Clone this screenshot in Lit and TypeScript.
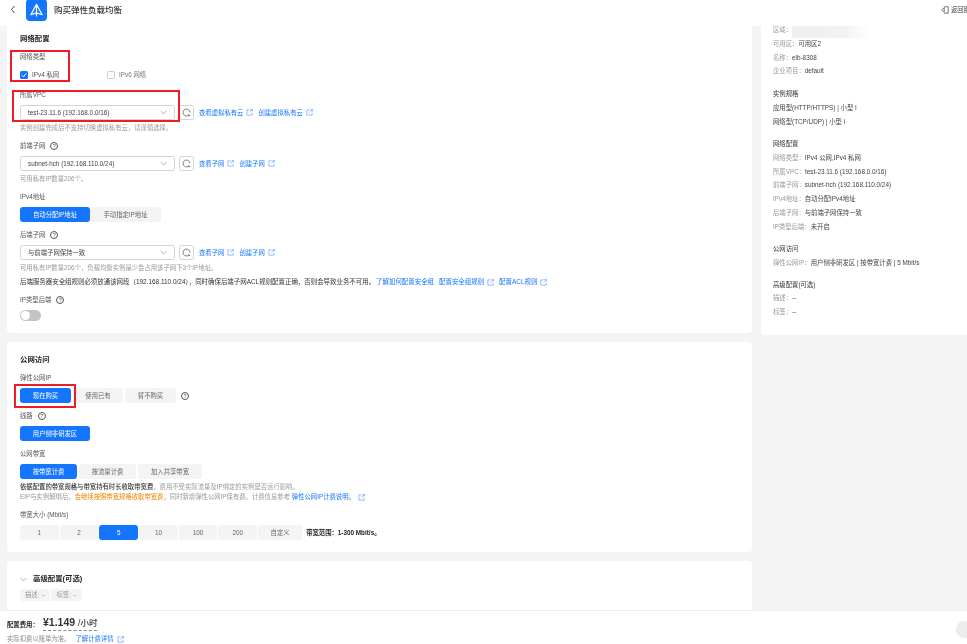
import { LitElement, html, css } from "lit";
import { customElement } from "lit/decorators.js";

const ext = html`<svg class="ext" viewBox="0 0 12 12"><path d="M6 1.5H1.5v9h9V6.5M7.5 1H11v3.5M11 1 6 6" fill="none" stroke="currentColor" stroke-width="1"/></svg>`;
const help = html`<span class="help">?</span>`;
const chev = html`<svg class="chev" viewBox="0 0 10 6"><path d="M1 1l4 4 4-4" fill="none" stroke="#8a8a8a" stroke-width="1"/></svg>`;
const refresh = html`<span class="refresh"><svg viewBox="0 0 12 12"><path d="M9.2 9.3A4.6 4.6 0 1 1 10.6 6M8.8 8.6 9.2 10.6 11 9.6" fill="none" stroke="#555" stroke-width="1"/></svg></span>`;

@customElement("app-root")
export class AppRoot extends LitElement {
  static styles = css`
    :host {
      display: flex; flex-direction: column; position: relative; height: 644px; width: 967px; overflow: hidden;
      background: #f4f4f4; color: #333; font: 6.35px/10px "Liberation Sans", "Noto Sans CJK SC", sans-serif;
      filter: blur(0.4px);
    }
    .head { height: 26px; flex: none; background: #fff; display: flex; align-items: flex-start; }
    .back { width: 6px; height: 9px; margin: 5px 0 0 10px; }
    .logo { width: 21px; height: 22px; margin: -1px 0 0 10px; flex: none; background: #1476ff; border-radius: 4px; display: flex; align-items: center; justify-content: center; }
    .logo svg { width: 15px; height: 15px; }
    .ttl { margin: 5px 0 0 7px; font-size: 8.5px; color: #333; font-weight: 500; }
    .ret { margin: 5px 0 0 auto; display: flex; align-items: center; gap: 2px; width: 26px; flex: none; white-space: nowrap; color: #444; overflow: hidden; }
    .ret svg { width: 8px; height: 8px; flex: none; }

    .main { flex: 1; min-height: 0; display: flex; overflow: hidden; padding-left: 7px; gap: 9px; }
    .left { width: 745px; flex: none; display: flex; flex-direction: column; gap: 9px; }
    .card { background: #fff; border-radius: 4px; padding: 13px 13px 12px; flex: none; }
    .card.first { padding-top: 8px; border-radius: 0 0 4px 4px; height: 307px; box-sizing: border-box; }
    .card.second { height: 210px; box-sizing: border-box; }
    .card.third { flex: 1; }
    h3 { margin: 0; font-size: 7.4px; line-height: 10px; font-weight: 700; color: #222; }
    .field { margin-top: 8px; }
    .lab { display: flex; align-items: center; gap: 5px; height: 10px; color: #555; }
    .ctl { margin-top: 5px; height: 15px; display: flex; align-items: center; }
    .hint { margin-top: 3px; color: #999; white-space: nowrap; }
    .warn { margin-top: 4px; color: #333; white-space: nowrap; display: flex; align-items: center; font-size: 6.45px; }
    .help { width: 8px; height: 8px; box-sizing: border-box; border: 0.8px solid #555; border-radius: 50%; font-size: 5.5px; line-height: 6.6px; text-align: center; color: #555; flex: none; }
    .help.after { margin-left: 5px; }
    .chk { width: 8px; height: 8px; background: #1476ff; border-radius: 1.5px; display: flex; flex: none; }
    .chk svg { width: 8px; height: 8px; }
    .chk.off { background: #fff; border: 0.8px solid #ccc; box-sizing: border-box; }
    .opt { display: flex; align-items: center; gap: 4px; color: #555; }
    .opt.a { width: 87px; }
    .opt.b { color: #777; }
    .sel { width: 155px; height: 15px; box-sizing: border-box; border: 0.8px solid #d4d4d4; border-radius: 2.5px; display: flex; align-items: center; justify-content: space-between; padding: 0 7px; color: #444; flex: none; }
    .chev { width: 7px; height: 5px; flex: none; }
    .refresh { width: 15px; height: 15px; margin-left: 4px; box-sizing: border-box; border: 0.8px solid #d4d4d4; border-radius: 2.5px; display: flex; align-items: center; justify-content: center; flex: none; }
    .refresh svg { width: 9px; height: 9px; }
    .links { display: flex; align-items: center; margin-left: 5px; color: #1476ff; }
    a { color: #1476ff; text-decoration: none; white-space: nowrap; display: inline-flex; align-items: center; }
    .links a { margin-right: 5px; }
    .ext { width: 7px; height: 7px; margin-left: 3px; color: #4a90ff; flex: none; }
    .warn a { margin-left: 5px; }
    .warn a:first-of-type { margin-left: 1px; }
    .tog { margin-top: 5px; width: 21px; height: 11px; border-radius: 6px; background: #c4c4c4; padding: 1px; box-sizing: border-box; }
    .tog i { display: block; width: 9px; height: 9px; border-radius: 50%; background: #fff; }
    .seg { display: flex; gap: 2px; height: 15px; }
    .seg > span { display: flex; align-items: center; justify-content: center; background: #f4f4f4; color: #666; border-radius: 3px; flex: none; box-sizing: border-box; }
    .seg > span.on { background: #1476ff; color: #fff; }
    .seg.join { gap: 0; }
    .seg.size { gap: 1px; }
    .w70 { width: 70px; } .w71 { width: 71px; } .w51 { width: 51px; } .w50 { width: 50px; }
    .w57 { width: 57px; } .w64 { width: 64px; } .w38 { width: 38.7px; } .w44 { width: 44px; }
    .range { margin-left: 4px; align-self: center; color: #222; font-weight: 700; white-space: nowrap; }
    .note { margin-top: 3px; color: #999; white-space: nowrap; display: flex; align-items: center; }
    .note.next { margin-top: 0; }
    .note b { color: #333; font-weight: 500; }
    .note em { color: #f08300; font-style: normal; }
    .adv { display: flex; align-items: center; gap: 6px; }
    .tags { display: flex; gap: 1px; margin-top: 5px; }
    .tags span { height: 12px; padding: 0 5px; display: flex; align-items: center; background: #f4f4f4; color: #999; border-radius: 2px; }

    .side { flex: 1; min-width: 0; height: 309px; background: #fff; border-radius: 0 0 0 4px; padding-left: 12px; box-sizing: border-box; display: flex; flex-direction: column; }
    .grp { display: flex; flex-direction: column; gap: 3.8px; margin-bottom: 12px; }
    .grp:first-child { margin-top: -1px; margin-bottom: 13px; }
    .row { color: #999; white-space: nowrap; height: 10px; }
    .row span { color: #444; }
    .row.t { color: #333; }
    .mask { display: inline-block; width: 77px; height: 16px; vertical-align: middle; margin: -3px 0; background: linear-gradient(90deg, #efefef, #f2f2f2 70%, #fff); }

    .foot { height: 34px; flex: none; background: #fff; border-top: 1px solid #efefef; box-sizing: border-box; padding: 5px 7px 0; display: flex; flex-direction: column; }
    .price { display: flex; align-items: center; height: 17px; }
    .price .k { color: #222; font-weight: 700; width: 36px; }
    .price .v { font-size: 10.5px; line-height: 13px; margin-top: -3px; font-weight: 700; color: #333; border-bottom: 0.8px dashed #888; white-space: nowrap; }
    .price .v small { font-size: 8.5px; font-weight: 500; }
    .sub { color: #888; display: flex; gap: 5px; margin-top: 1px; align-items: center; }
    .bubble { position: absolute; right: -6px; bottom: 6px; width: 17px; height: 17px; border-radius: 50%; background: #ececec; }
    .mark { position: absolute; border: 2px solid #ee1c25; box-sizing: border-box; }
    .m1 { left: 10px; top: 50px; width: 60px; height: 32px; }
    .m2 { left: 12px; top: 90px; width: 168px; height: 32px; }
    .m3 { left: 14px; top: 384px; width: 62px; height: 24px; }
  `;

  render() {
    return html`
      <div class="head">
        <svg class="back" viewBox="0 0 6 9"><path d="M4.5 1 1.5 4.5l3 3.5" fill="none" stroke="#444" stroke-width="1"/></svg>
        <div class="logo"><svg viewBox="0 0 16 16"><path d="M8 1.5 14 12.5 8 10.5 2 12.5ZM8 1.5V14.5" fill="none" stroke="#fff" stroke-width="1.3" stroke-linejoin="round"/></svg></div>
        <div class="ttl">购买弹性负载均衡</div>
        <div class="ret"><svg viewBox="0 0 10 10"><path d="M4 1h5v8H4M1 5l3-3v6z" fill="none" stroke="#555" stroke-width="1"/></svg>返回服务</div>
      </div>
      <div class="main">
        <div class="left">
          <section class="card first">
            <h3>网络配置</h3>
            <div class="field"><div class="lab">网络类型</div>
              <div class="ctl">
                <label class="opt a"><span class="chk"><svg viewBox="0 0 8 8"><path d="M1.8 4.2 3.4 5.8 6.4 2.4" fill="none" stroke="#fff" stroke-width="1"/></svg></span>IPv4 私网</label>
                <label class="opt b"><span class="chk off"></span>IPv6 网络</label>
              </div></div>
            <div class="field"><div class="lab">所属VPC</div>
              <div class="ctl"><div class="sel">test-23.11.6 (192.168.0.0/16)${chev}</div>${refresh}
                <div class="links"><a>查看虚拟私有云${ext}</a><a>创建虚拟私有云${ext}</a></div></div>
              <div class="hint">实例创建完成后不支持切换虚拟私有云，请谨慎选择。</div></div>
            <div class="field"><div class="lab">前端子网 ${help}</div>
              <div class="ctl"><div class="sel">subnet-hch (192.168.110.0/24)${chev}</div>${refresh}
                <div class="links"><a>查看子网${ext}</a><a>创建子网${ext}</a></div></div>
              <div class="hint">可用私有IP数量206个。</div></div>
            <div class="field"><div class="lab">IPv4地址</div>
              <div class="ctl"><div class="seg join"><span class="on w70">自动分配IP地址</span><span class="w71">手动指定IP地址</span></div></div></div>
            <div class="field"><div class="lab">后端子网 ${help}</div>
              <div class="ctl"><div class="sel">与前端子网保持一致${chev}</div>${refresh}
                <div class="links"><a>查看子网${ext}</a><a>创建子网${ext}</a></div></div>
              <div class="hint">可用私有IP数量206个，负载均衡实例最少会占用该子网下3个IP地址。</div>
              <div class="warn">后端服务器安全组规则必须放通该网段（192.168.110.0/24），同时确保后端子网ACL规则配置正确，否则会导致业务不可用。<a>了解如何配置安全组</a><a>配置安全组规则${ext}</a><a>配置ACL规则${ext}</a></div></div>
            <div class="field"><div class="lab">IP类型后端 ${help}</div><div class="tog"><i></i></div></div>
          </section>
          <section class="card second">
            <h3>公网访问</h3>
            <div class="field"><div class="lab">弹性公网IP</div>
              <div class="ctl"><div class="seg"><span class="on w51">现在购买</span><span class="w50">使用已有</span><span class="w51">暂不购买</span></div><span class="help after">?</span></div></div>
            <div class="field"><div class="lab">线路 ${help}</div>
              <div class="ctl"><div class="seg"><span class="on w70">用户侧非研发区</span></div></div></div>
            <div class="field"><div class="lab">公网带宽</div>
              <div class="ctl"><div class="seg"><span class="on w57">按带宽计费</span><span class="w57">按流量计费</span><span class="w64">加入共享带宽</span></div></div>
              <div class="note"><b>依据配置的带宽规格与带宽持有时长收取带宽费</b>，费用不受实际流量及IP绑定的实例是否运行影响。</div>
              <div class="note next">EIP与实例解绑后，<em>会继续按照带宽规格收取带宽费</em>，同时新增弹性公网IP保有费。计费信息参考&nbsp;<a>弹性公网IP计费说明。${ext}</a></div></div>
            <div class="field"><div class="lab">带宽大小 (Mbit/s)</div>
              <div class="ctl"><div class="seg size"><span class="w38">1</span><span class="w38">2</span><span class="on w38">5</span><span class="w38">10</span><span class="w38">100</span><span class="w38">200</span><span class="w44">自定义</span></div><span class="range">带宽范围：1-300 Mbit/s。</span></div></div>
          </section>
          <section class="card third">
            <h3 class="adv">${chev}高级配置(可选)</h3>
            <div class="tags"><span>描述: --</span><span>标签: --</span></div>
          </section>
        </div>
        <aside class="side">
          <div class="grp">
            <div class="row">区域：<i class="mask"></i></div>
            <div class="row">可用区：<span>可用区2</span></div>
            <div class="row">名称：<span>elb-8308</span></div>
            <div class="row">企业项目：<span>default</span></div>
          </div>
          <div class="grp">
            <div class="row t">实例规格</div>
            <div class="row"><span>应用型(HTTP/HTTPS) | 小型 I</span></div>
            <div class="row"><span>网络型(TCP/UDP) | 小型 I</span></div>
          </div>
          <div class="grp">
            <div class="row t">网络配置</div>
            <div class="row">网络类型：<span>IPv4 公网,IPv4 私网</span></div>
            <div class="row">所属VPC：<span>test-23.11.6 (192.168.0.0/16)</span></div>
            <div class="row">前端子网：<span>subnet-hch (192.168.110.0/24)</span></div>
            <div class="row">IPv4地址：<span>自动分配IPv4地址</span></div>
            <div class="row">后端子网：<span>与前端子网保持一致</span></div>
            <div class="row">IP类型后端：<span>未开启</span></div>
          </div>
          <div class="grp">
            <div class="row t">公网访问</div>
            <div class="row">弹性公网IP：<span>用户侧非研发区 | 按带宽计费 | 5 Mbit/s</span></div>
          </div>
          <div class="grp">
            <div class="row t">高级配置(可选)</div>
            <div class="row">描述：<span>--</span></div>
            <div class="row">标签：<span>--</span></div>
          </div>
        </aside>
      </div>
      <footer class="foot">
        <div class="price"><span class="k">配置费用：</span><span class="v">¥1.149 <small>/小时</small></span></div>
        <div class="sub">实际扣费以账单为准。<a>了解计费详情${ext}</a></div>
      </footer>
      <div class="bubble"></div>
      <div class="mark m1"></div><div class="mark m2"></div><div class="mark m3"></div>
    `;
  }
}
